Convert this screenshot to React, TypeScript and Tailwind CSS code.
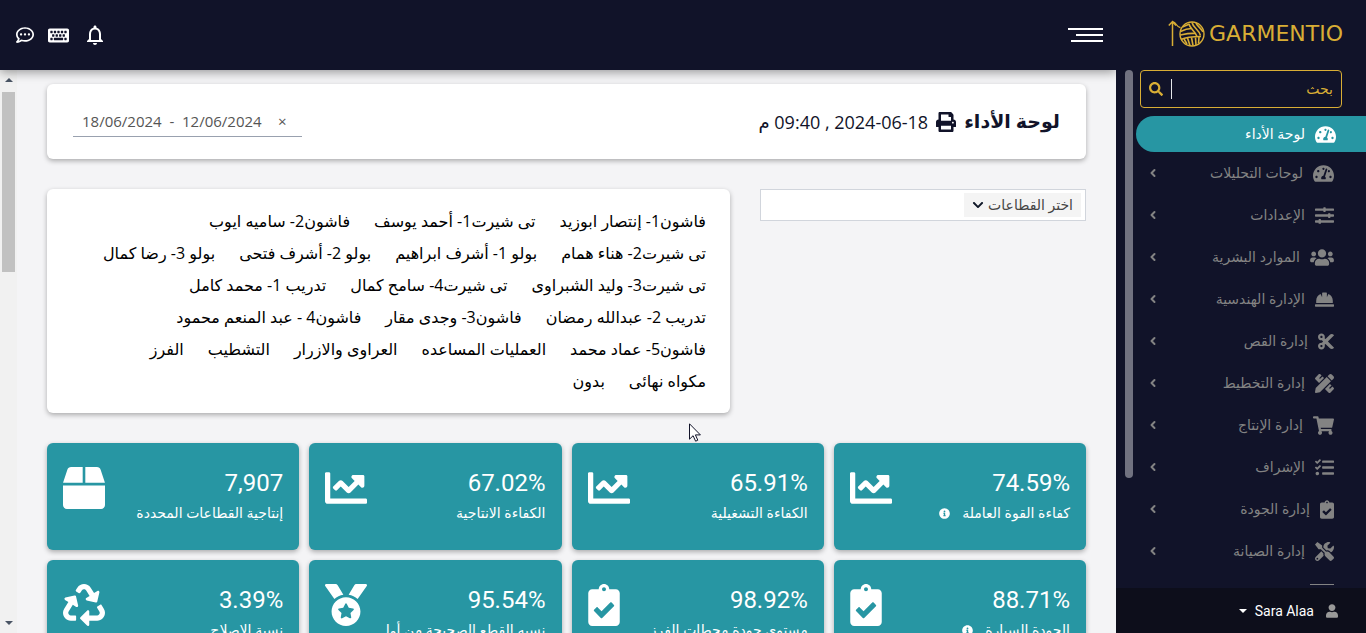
import type { IconType } from "react-icons";
import {
  FaBox,
  FaChartLine,
  FaChevronDown,
  FaClipboardCheck,
  FaCut,
  FaHardHat,
  FaInfoCircle,
  FaKeyboard,
  FaMedal,
  FaPencilRuler,
  FaPrint,
  FaRecycle,
  FaRegCommentDots,
  FaSearch,
  FaShoppingCart,
  FaSlidersH,
  FaTachometerAlt,
  FaTasks,
  FaTools,
  FaUser,
  FaUsers,
} from "react-icons/fa";
import { MdNotificationsNone } from "react-icons/md";
import { FiChevronLeft } from "react-icons/fi";

interface NavItem {
  label: string;
  icon: IconType;
  iconWidth: string;
}

interface Stat {
  value: string;
  label: string;
  icon: IconType;
  iconWidth?: string;
  info?: boolean;
}

const navItems: NavItem[] = [
  { label: "لوحات التحليلات", icon: FaTachometerAlt, iconWidth: "w-[21px]" },
  { label: "الإعدادات", icon: FaSlidersH, iconWidth: "w-[19px]" },
  { label: "الموارد البشرية", icon: FaUsers, iconWidth: "w-6" },
  { label: "الإدارة الهندسية", icon: FaHardHat, iconWidth: "w-[19px]" },
  { label: "إدارة القص", icon: FaCut, iconWidth: "w-4" },
  { label: "إدارة التخطيط", icon: FaPencilRuler, iconWidth: "w-[19px]" },
  { label: "إدارة الإنتاج", icon: FaShoppingCart, iconWidth: "w-[21px]" },
  { label: "الإشراف", icon: FaTasks, iconWidth: "w-[19px]" },
  { label: "إدارة الجودة", icon: FaClipboardCheck, iconWidth: "w-[14px]" },
  { label: "إدارة الصيانة", icon: FaTools, iconWidth: "w-[19px]" },
];

const sectionRows = [
  ["فاشون1- إنتصار ابوزيد", "تى شيرت1- أحمد يوسف", "فاشون2- ساميه ايوب"],
  ["تى شيرت2- هناء همام", "بولو 1- أشرف ابراهيم", "بولو 2- أشرف فتحى", "بولو 3- رضا كمال"],
  ["تى شيرت3- وليد الشبراوى", "تى شيرت4- سامح كمال", "تدريب 1- محمد كامل"],
  ["تدريب 2- عبدالله رمضان", "فاشون3- وجدى مقار", "فاشون4 - عبد المنعم محمود"],
  ["فاشون5- عماد محمد", "العمليات المساعده", "العراوى والازرار", "التشطيب", "الفرز"],
  ["مكواه نهائى", "بدون"],
];

const stats: Stat[] = [
  { value: "74.59%", label: "كفاءة القوة العاملة", icon: FaChartLine, info: true },
  { value: "65.91%", label: "الكفاءة التشغيلية", icon: FaChartLine },
  { value: "67.02%", label: "الكفاءة الانتاجية", icon: FaChartLine },
  { value: "7,907", label: "إنتاجية القطاعات المحددة", icon: FaBox },
  { value: "88.71%", label: "الجودة السيارة", icon: FaClipboardCheck, iconWidth: "w-8", info: true },
  { value: "98.92%", label: "مستوى جودة محطات الفرز", icon: FaClipboardCheck, iconWidth: "w-8" },
  { value: "95.54%", label: "نسبه القطع الصحيحة من أول", icon: FaMedal },
  { value: "3.39%", label: "نسبة الإصلاح", icon: FaRecycle },
];

const Logo = () => (
  <div dir="ltr" className="flex items-center gap-1 text-[#d9ae35]">
    <svg viewBox="0 0 37 28" className="h-7 w-[37px]" fill="none" stroke="currentColor" aria-hidden="true">
      <path d="M4.500 26V1.500M.8 5.500l3.700-4 3.500 4" strokeWidth="1.5" />
      <path d="M4.500 2c4-.5 4 6 8 5.500" strokeWidth="1.3" />
      <circle cx="24" cy="14" r="12" strokeWidth="1.4" />
      <path d="M14.500 7l7-3M12.500 11.500c4-2 7-3 11-3M12.200 15c5-1 9-2 15-1.500M13 19.500c6-3 12-3 20-3" strokeWidth="1.6" />
      <path d="M21 4c1 5 6 7 8 12.500M24 2.500c1 5 7 7 8.500 13M28 3c1 3 5 5 7 9" strokeWidth="1.6" />
      <path d="M16 19l3 5M19.500 18l2.500 7.500M23.500 17.500l1.500 8M27.500 17.500l.5 7.500M31 17l-.5 6.500" strokeWidth="1.6" />
    </svg>
    <span className="font-['DejaVu_Sans',sans-serif] text-[22px] leading-7">GARMENTIO</span>
  </div>
);

const Sidebar = () => (
  <aside className="relative z-20 flex w-[250px] shrink-0 flex-col bg-[#111329]">
    <div className="flex h-[70px] shrink-0 items-center pr-[23px] pb-0.5">
      <Logo />
    </div>
    <div className="flex min-h-0 flex-1 overflow-hidden">
      <nav className="min-w-0 flex-1">
        <label className="mr-6 ml-[7px] flex h-[38px] items-center rounded border border-[#d9ae35] px-2">
          <input
            type="search"
            aria-label="بحث"
            placeholder="بحث"
            className="min-w-0 flex-1 bg-transparent text-sm text-[#d9ae35] outline-none placeholder:text-[#d9ae35]"
          />
          <span className="ml-2 h-5 w-px bg-gray-200" />
          <FaSearch className="size-[14px] text-[#d9ae35]" />
        </label>
        <a href="#" className="mt-2 mr-0 ml-[3px] flex h-9 items-center gap-[10px] rounded-l-full bg-[#2796a3] pr-[30px] text-sm text-white">
          <FaTachometerAlt className="h-[19px] w-[21px]" />
          لوحة الأداء
        </a>
        {navItems.map(({ label, icon: Icon, iconWidth }) => (
          <a key={label} href="#" className="flex h-[42px] items-center gap-[10px] pr-8 pl-[14px] text-sm text-[#838383]">
            <Icon className={`h-[19px] ${iconWidth}`} />
            <span className="flex-1">{label}</span>
            <FiChevronLeft className="size-3" strokeWidth={4} />
          </a>
        ))}
        <div className="mt-3 mr-8 h-px w-6 bg-[#838383]" />
      </nav>
      <div className="ml-[9px] h-[408px] w-2 rounded-full bg-[#717280]" />
    </div>
    <button type="button" className="flex h-[45px] shrink-0 items-center bg-[#0d0e1b] pr-7 text-sm text-white">
      <FaUser className="h-[14px] w-3 text-[#999999]" />
      <span className="mr-3 font-['Roboto',sans-serif]">Sara Alaa</span>
      <span className="mr-2 border-x-4 border-t-4 border-x-transparent border-t-white" />
    </button>
  </aside>
);

const Header = () => (
  <header className="relative z-10 flex h-[70px] shrink-0 items-center justify-between bg-[#111329] pr-[13px] pl-4 text-white shadow-[0_2px_10px_rgba(0,0,0,0.4)]">
    <button type="button" aria-label="القائمة" className="flex w-[35px] flex-col gap-1">
      <span className="h-0.5 w-full bg-white" />
      <span className="h-0.5 w-[27px] bg-white" />
      <span className="h-0.5 w-8 bg-white" />
    </button>
    <div className="flex items-center gap-[14px]">
      <button type="button" aria-label="الإشعارات">
        <MdNotificationsNone className="size-6" />
      </button>
      <button type="button" aria-label="لوحة المفاتيح">
        <FaKeyboard className="h-[19px] w-[21px]" />
      </button>
      <button type="button" aria-label="الرسائل">
        <FaRegCommentDots className="size-[18px]" />
      </button>
    </div>
  </header>
);

const StatCard = ({ value, label, icon: Icon, iconWidth = "w-[42px]", info }: Stat) => (
  <div className="flex h-[107px] justify-between rounded-md bg-[#2796a3] px-4 pt-6 text-white shadow-[0_2px_5px_rgba(0,0,0,0.3)]">
    <div>
      <div className="font-['Roboto',sans-serif] text-2xl leading-8">{value}</div>
      <div className="mt-1 flex items-center gap-3 text-sm leading-5 whitespace-nowrap">
        {label}
        {info && <FaInfoCircle className="size-[11px]" />}
      </div>
    </div>
    <Icon className={`h-[42px] shrink-0 ${iconWidth}`} />
  </div>
);

const App = () => (
  <div
    dir="rtl"
    className="flex h-screen overflow-hidden bg-[#f4f4f6] font-['Open_Sans','DejaVu_Sans',sans-serif] text-[#111329]"
  >
    <Sidebar />
    <div className="flex min-w-0 flex-1 flex-col">
      <Header />
      <div className="flex min-h-0 flex-1">
        <main className="min-w-0 flex-1 overflow-hidden px-[30px] pt-[14px]">
          <section className="flex h-[75px] items-center justify-between rounded-md bg-white px-[26px] shadow-[0_2px_5px_rgba(0,0,0,0.3)]">
            <div className="flex items-center gap-2">
              <h1 className="text-[19px] font-bold">لوحة الأداء</h1>
              <FaPrint className="size-5" />
              <span className="text-lg">
                <bdi dir="ltr">2024-06-18</bdi> , 09:40 م
              </span>
            </div>
            <div dir="ltr" className="flex h-[30px] w-[229px] items-center border-b border-gray-400 px-[9px] text-[15px] text-[#555555]">
              <input type="text" aria-label="الفترة" defaultValue="18/06/2024  -  12/06/2024" className="w-[196px] bg-transparent outline-none" />
              <button type="button" aria-label="مسح">×</button>
            </div>
          </section>

          <div className="mt-[30px] flex items-start gap-[30px]">
            <div className="flex h-8 flex-1 items-center border border-gray-300 bg-white px-1">
              <button type="button" className="flex h-6 items-center gap-1 bg-[#f4f4f4] px-2 text-sm text-[#444444]">
                اختر القطاعات
                <FaChevronDown className="size-3 text-gray-900" />
              </button>
            </div>
            <section className="w-[683px] rounded-md bg-white px-6 py-4 text-base leading-8 text-black shadow-[0_2px_5px_rgba(0,0,0,0.3)]">
              {sectionRows.map((row) => (
                <div key={row[0]} className="flex gap-6 whitespace-nowrap">
                  {row.map((name) => (
                    <span key={name}>{name}</span>
                  ))}
                </div>
              ))}
            </section>
          </div>

          <div className="mt-[30px] grid grid-cols-4 gap-[10px]">
            {stats.map((stat) => (
              <StatCard key={stat.value} {...stat} />
            ))}
          </div>
        </main>
        <div className="flex w-[17px] flex-col items-center justify-between bg-[#f1f1f1] py-2">
          <span className="border-x-4 border-b-4 border-x-transparent border-b-gray-600" />
          <span className="mt-[10px] mb-auto h-[180px] w-[13px] bg-[#c1c1c1]" />
          <span className="border-x-4 border-t-4 border-x-transparent border-t-gray-600" />
        </div>
      </div>
    </div>
    <svg viewBox="0 0 12 19" className="absolute top-[423px] left-[689px] z-30 h-[19px] w-3" aria-hidden="true">
      <path d="M.5.8v15.400l3.600-3.500 2.500 5.500 2.200-1-2.400-5.300h5z" fill="#fff" stroke="#111329" />
    </svg>
  </div>
);

export default App;
